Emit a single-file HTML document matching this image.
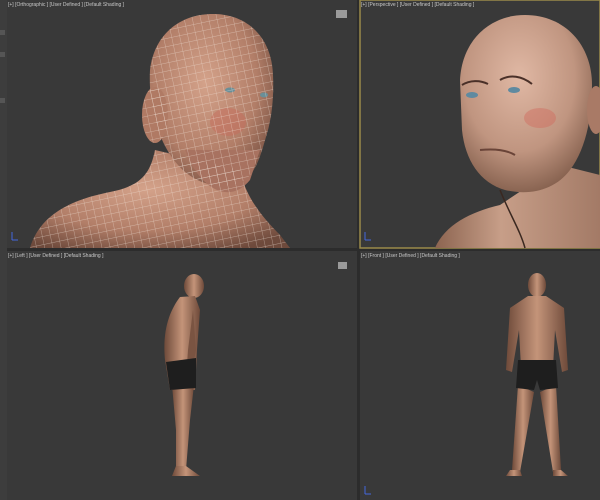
<!DOCTYPE html>
<html><head><style>
html,body{margin:0;padding:0;background:#2c2c2c;width:600px;height:500px;overflow:hidden;font-family:"Liberation Sans",sans-serif}
.t{position:absolute;font-size:5px;color:#c8c8c8;white-space:nowrap}
</style></head><body>
<svg width="600" height="500" style="position:absolute;left:0;top:0">
<defs>
<pattern id="g" width="8" height="8" patternUnits="userSpaceOnUse" patternTransform="rotate(-12)">
<path d="M0 0H8M0 0V8" stroke="#f2e6dc" stroke-width="0.7" fill="none"/></pattern>
<radialGradient id="sk" cx="0.45" cy="0.4" r="0.7"><stop offset="0" stop-color="#d4a28a"/><stop offset="0.6" stop-color="#b27e68"/><stop offset="1" stop-color="#6e4a3c"/></radialGradient>
<radialGradient id="sk2" cx="0.45" cy="0.35" r="0.7"><stop offset="0" stop-color="#e0b8a4"/><stop offset="0.6" stop-color="#c09580"/><stop offset="1" stop-color="#7e5a48"/></radialGradient>
<linearGradient id="sh" x1="0" x2="1"><stop offset="0" stop-color="#8c6450"/><stop offset="0.4" stop-color="#c79e88"/><stop offset="1" stop-color="#a37a66"/></linearGradient>
<linearGradient id="bd" x1="0" x2="1"><stop offset="0" stop-color="#6e4a3a"/><stop offset="0.5" stop-color="#c49479"/><stop offset="1" stop-color="#6e4a3a"/></linearGradient>
</defs>
<rect x="0" y="0" width="7" height="500" fill="#3d3d3d"/>
<g fill="#555"><rect x="0" y="30" width="5" height="5"/><rect x="0" y="52" width="5" height="5"/><rect x="0" y="98" width="5" height="5"/></g>
<rect x="7" y="0" width="350" height="248" fill="#393939"/>
<rect x="360" y="0" width="240" height="248" fill="#393939" stroke="#9a8a4a" stroke-width="1.5"/>
<rect x="7" y="251" width="350" height="249" fill="#393939"/>
<rect x="360" y="251" width="240" height="249" fill="#393939"/>
<!-- TL head -->
<g>
<path d="M30 248 C40 215 70 200 110 192 C140 186 150 175 155 150 L240 170 C245 195 260 215 280 235 L290 248Z" fill="url(#sk)"/>
<path d="M150 70 C155 30 185 13 215 14 C250 15 272 40 273 75 C274 95 272 115 268 130 C262 150 258 170 245 180 C225 192 195 185 178 165 C160 145 148 110 150 70Z" fill="url(#sk)"/>
<ellipse cx="155" cy="115" rx="13" ry="28" fill="#b07a64"/>
<path d="M185 150 C200 190 230 205 250 180 L260 150Z" fill="#a87260"/>
<ellipse cx="228" cy="122" rx="18" ry="14" fill="#c86a5a" opacity="0.45"/>
<ellipse cx="230" cy="90" rx="5" ry="2.5" fill="#6a8f98"/>
<ellipse cx="264" cy="95" rx="4" ry="2.5" fill="#6a8f98"/>
<path d="M30 248 C40 215 70 200 110 192 C140 186 150 175 155 150 L240 170 C245 195 260 215 280 235 L290 248Z" fill="url(#g)" opacity="0.65"/>
<path d="M150 70 C155 30 185 13 215 14 C250 15 272 40 273 75 C274 95 272 115 268 130 C262 150 258 170 245 180 C225 192 195 185 178 165 C160 145 148 110 150 70Z" fill="url(#g)" opacity="0.65"/>
<ellipse cx="155" cy="115" rx="13" ry="28" fill="url(#g)" opacity="0.6"/>
</g>
<rect x="336" y="10" width="11" height="8" fill="#9a9a9a"/>
<!-- TR head -->
<g>
<path d="M435 248 C445 225 470 212 500 205 L560 165 L600 175 L600 248Z" fill="url(#sh)"/>
<path d="M460 80 C462 40 490 15 525 15 C565 15 592 45 592 85 C592 120 585 150 570 170 C555 190 530 196 505 190 C480 183 465 160 462 130 Z" fill="url(#sk2)"/>
<ellipse cx="596" cy="110" rx="9" ry="24" fill="#a97a66"/>
<ellipse cx="540" cy="118" rx="16" ry="10" fill="#d06a5e" opacity="0.45"/>
<path d="M462 85 C470 80 480 80 488 84" stroke="#4a3028" stroke-width="2" fill="none"/>
<path d="M500 80 C510 74 522 76 532 84" stroke="#4a3028" stroke-width="2" fill="none"/>
<ellipse cx="472" cy="95" rx="6" ry="3" fill="#5f8aa0"/>
<ellipse cx="514" cy="90" rx="6" ry="3" fill="#5f8aa0"/>
<path d="M480 150 C500 148 510 152 515 155" stroke="#6a4438" stroke-width="2" fill="none"/>
<path d="M500 190 C510 215 520 230 525 248" stroke="#3a2820" stroke-width="1.5" fill="none"/>
</g>
<!-- BL figure -->
<g fill="url(#bd)">
<ellipse cx="194" cy="286" rx="10" ry="12"/>
<path d="M180 297 C170 310 162 330 165 360 L170 390 L195 390 L197 350 L200 310 L195 296Z"/>
<path d="M172 385 L176 430 L176 470 L186 470 L190 420 L194 385Z"/>
<path d="M176 466 L172 476 L200 476 L186 466Z"/>
<path d="M193 310 L188 350 L186 380 L190 382 L196 350Z" fill="#7a5442"/>
</g>
<path d="M166 362 L196 358 L196 388 L170 390Z" fill="#1e1e1e"/>
<rect x="338" y="262" width="9" height="7" fill="#9a9a9a"/>
<!-- BR figure -->
<g fill="url(#bd)">
<ellipse cx="537" cy="285" rx="9" ry="12"/>
<path d="M528 296 L546 296 L564 308 L568 370 L562 372 L555 330 L553 368 L521 368 L519 330 L512 372 L506 370 L510 308Z"/>
<path d="M518 385 L512 470 L520 472 L534 392Z"/>
<path d="M540 392 L553 472 L561 470 L556 385Z"/>
<path d="M510 470 L506 476 L522 476 L520 470Z"/>
<path d="M553 470 L553 476 L568 476 L561 470Z"/>
</g>
<path d="M518 360 L556 360 L558 388 L540 390 L537 380 L534 390 L516 388Z" fill="#1e1e1e"/>
<path d="M12 240V232M12 240H18" stroke="#4466dd" stroke-width="1"/>
<path d="M365 240V232M365 240H371" stroke="#4466dd" stroke-width="1"/>
<path d="M365 494V486M365 494H371" stroke="#4466dd" stroke-width="1"/>
</svg>
<div class="t" style="left:8px;top:2px">[+] [Orthographic ] [User Defined ] [Default Shading ]</div>
<div class="t" style="left:361px;top:2px">[+] [Perspective ] [User Defined ] [Default Shading ]</div>
<div class="t" style="left:8px;top:253px">[+] [Left ] [User Defined ] [Default Shading ]</div>
<div class="t" style="left:361px;top:253px">[+] [Front ] [User Defined ] [Default Shading ]</div>
</body></html>
